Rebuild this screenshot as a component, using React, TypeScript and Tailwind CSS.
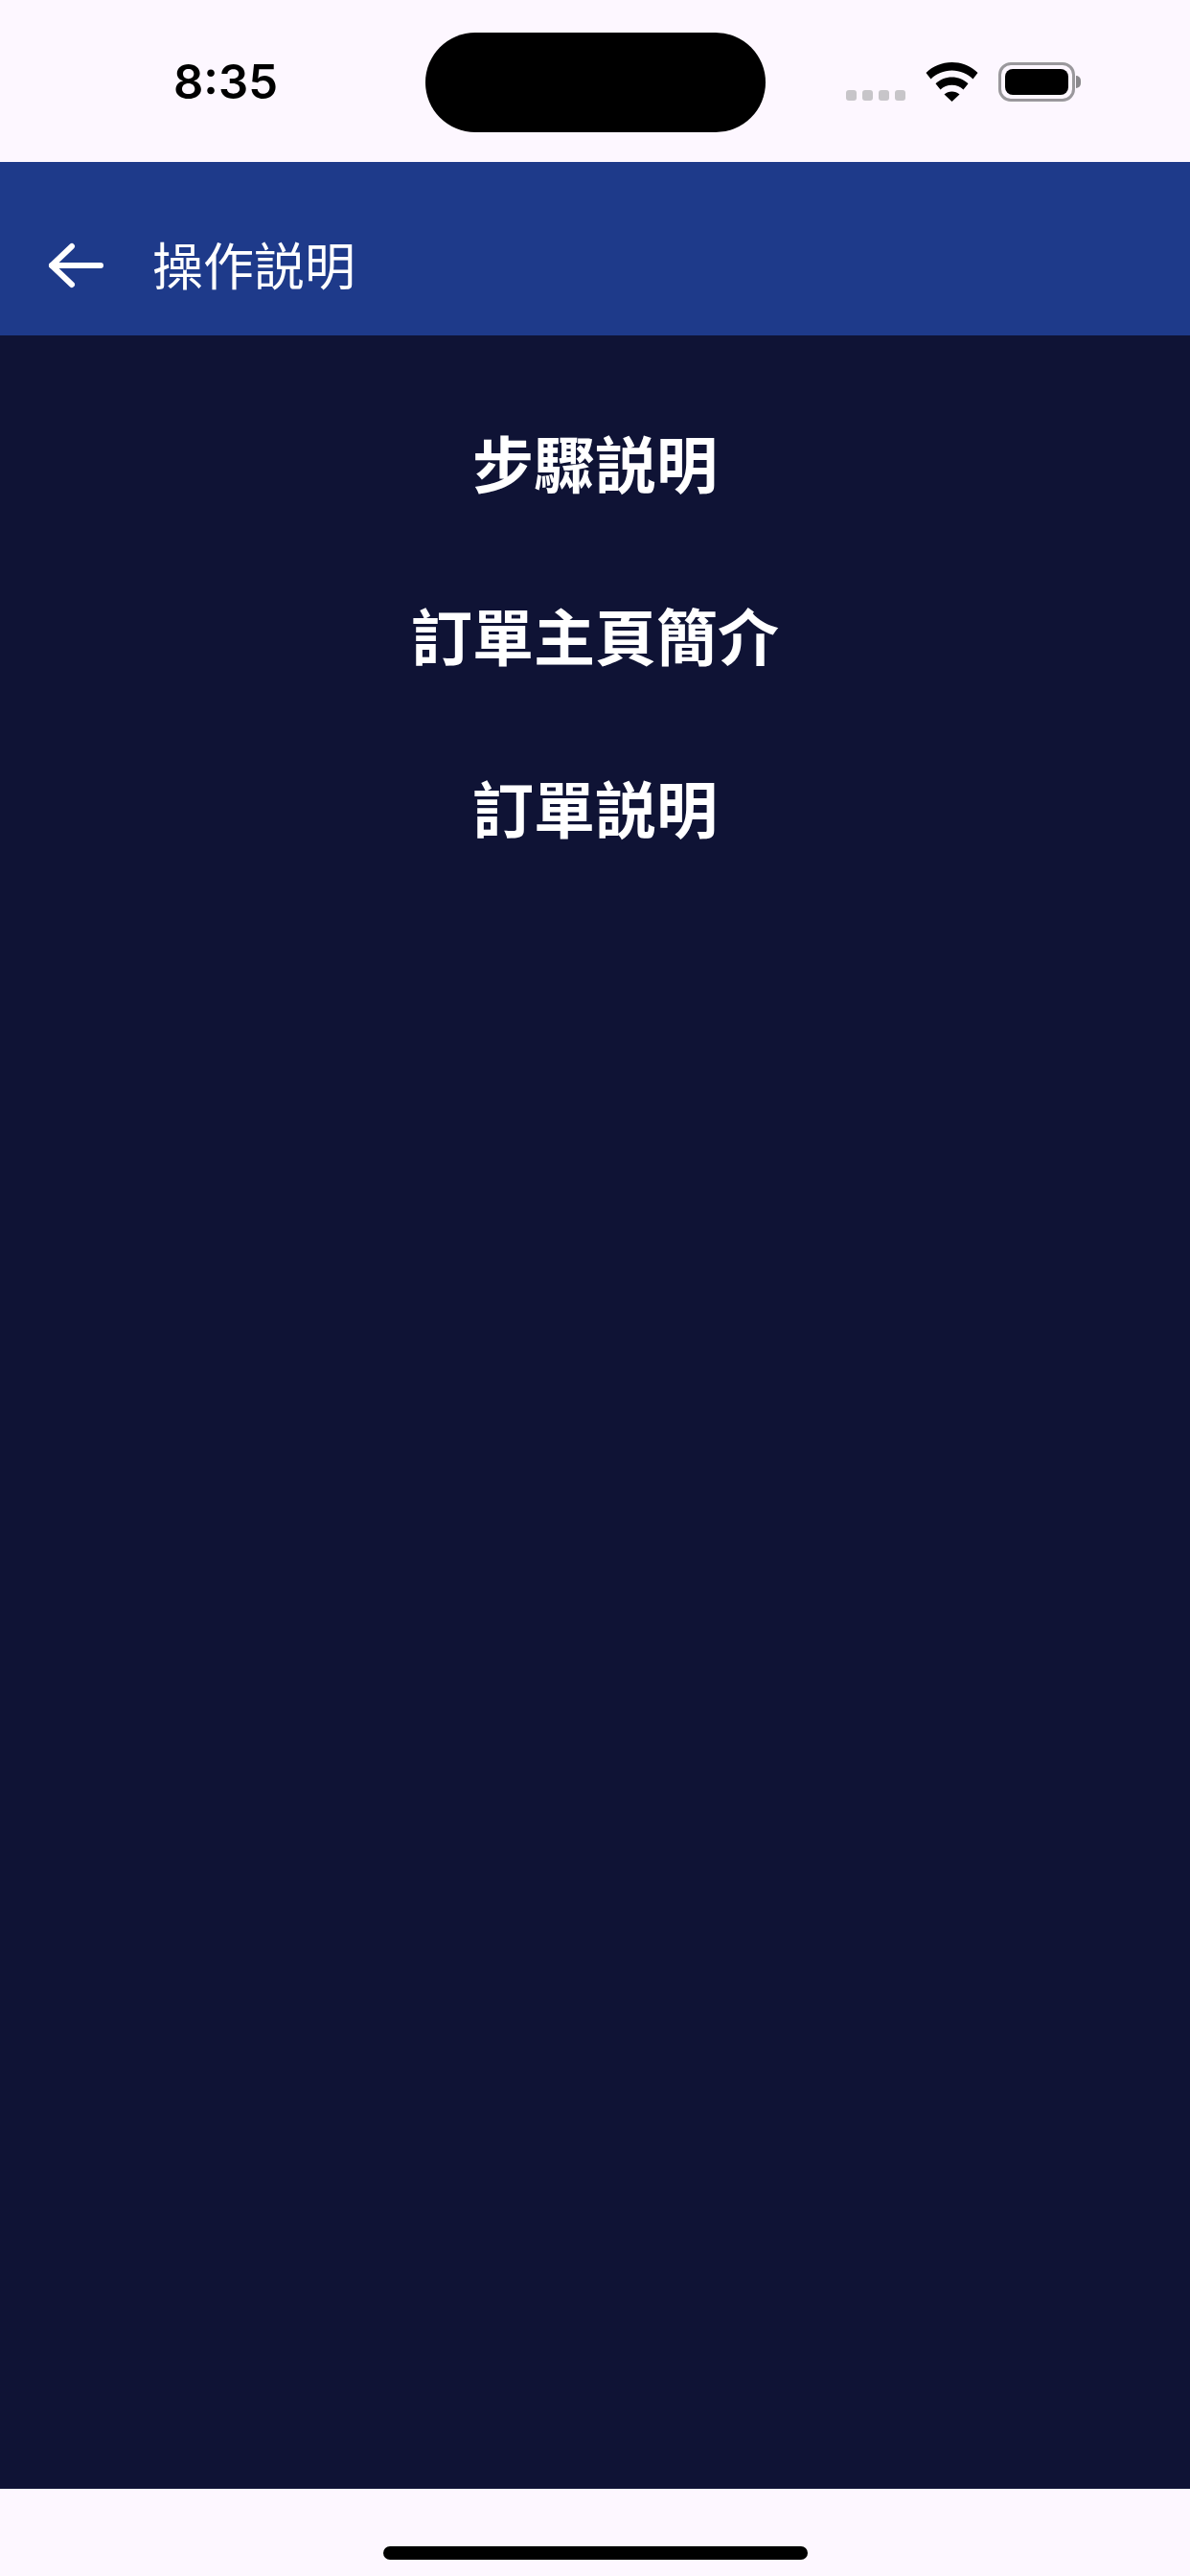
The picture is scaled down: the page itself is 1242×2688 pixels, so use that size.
import React from "react";

const CJK = { fontFamily: '"Noto Sans CJK TC", "Noto Sans CJK JP", sans-serif' };

function Wifi() {
  return (
    <svg width="55" height="41" viewBox="0 0 55 41" fill="#000">
      <path d="M27.5 0C17 0 7.5 4 0.5 11l5 6.5C11 12 19 8.5 27.5 8.5S44 12 49.5 17.5l5-6.5C47.5 4 38 0 27.5 0z" />
      <path d="M27.5 15.5c-6.5 0-12.5 2.5-17 6.8l5 6.2c3-3 7.3-4.8 12-4.8s9 1.800 12 4.800l5-6.200c-4.500-4.300-10.500-6.800-17-6.800z" />
      <path d="M27.500 30.500c-3 0-5.800 1.100-8 3l8 7.500 8-7.500c-2.200-1.900-5-3-8-3z" />
    </svg>
  );
}

function Battery() {
  return (
    <div className="flex items-center">
      <div className="w-[80px] h-[41px] rounded-[13px] border-[3px] border-[#9a989c] p-[4px] flex">
        <div className="flex-1 rounded-[8px] bg-black" />
      </div>
      <div className="w-[5px] h-[13px] ml-[1px] rounded-r-[5px] bg-[#8a888c]" />
    </div>
  );
}

function Item({ label }: { label: string }) {
  return (
    <div className="h-[180px] flex items-center justify-center text-white text-[64px] font-bold leading-none" style={CJK}>
      {label}
    </div>
  );
}

export default function App() {
  return (
    <div className="w-[1242px] h-[2688px] flex flex-col bg-[#fdf7ff] overflow-hidden">
      <div className="h-[169px] flex items-start shrink-0">
        <span className="ml-[181px] mt-[57px] w-[110px] text-[49px] leading-[58px] font-semibold text-black whitespace-nowrap" style={{ fontFamily: 'Inter, sans-serif' }}>
          8:35
        </span>
        <div className="ml-[153px] mt-[34px] w-[355px] h-[104px] rounded-[52px] bg-black" />
        <div className="ml-[84px] mt-[94px] flex gap-[6px]">
          <div className="w-[11px] h-[11px] rounded-[3px] bg-[#c7c5c9]" />
          <div className="w-[11px] h-[11px] rounded-[3px] bg-[#c7c5c9]" />
          <div className="w-[11px] h-[11px] rounded-[3px] bg-[#c7c5c9]" />
          <div className="w-[11px] h-[11px] rounded-[3px] bg-[#c7c5c9]" />
        </div>
        <div className="ml-[21px] mt-[65px]">
          <Wifi />
        </div>
        <div className="ml-[21px] mt-[65px]">
          <Battery />
        </div>
      </div>

      <div className="h-[181px] shrink-0 bg-[#1e3a8a] flex items-center pl-[50px] pt-[34px]">
        <svg width="58" height="48" viewBox="0 0 58 48" fill="none" stroke="#fff" strokeWidth="6" strokeLinecap="round" strokeLinejoin="round">
          <path d="M55 24H4" />
          <path d="M25 4L4 24l21 20" />
        </svg>
        <span className="ml-[51px] mt-[-3px] text-[53px] leading-none text-white" style={CJK}>
          操作説明
        </span>
      </div>

      <div className="flex-1 bg-[#0f1335] pt-[41px]">
        <Item label="步驟説明" />
        <Item label="訂單主頁簡介" />
        <Item label="訂單説明" />
      </div>

      <div className="h-[91px] shrink-0 flex justify-center pt-[60px]">
        <div className="w-[443px] h-[14px] rounded-full bg-black" />
      </div>
    </div>
  );
}
